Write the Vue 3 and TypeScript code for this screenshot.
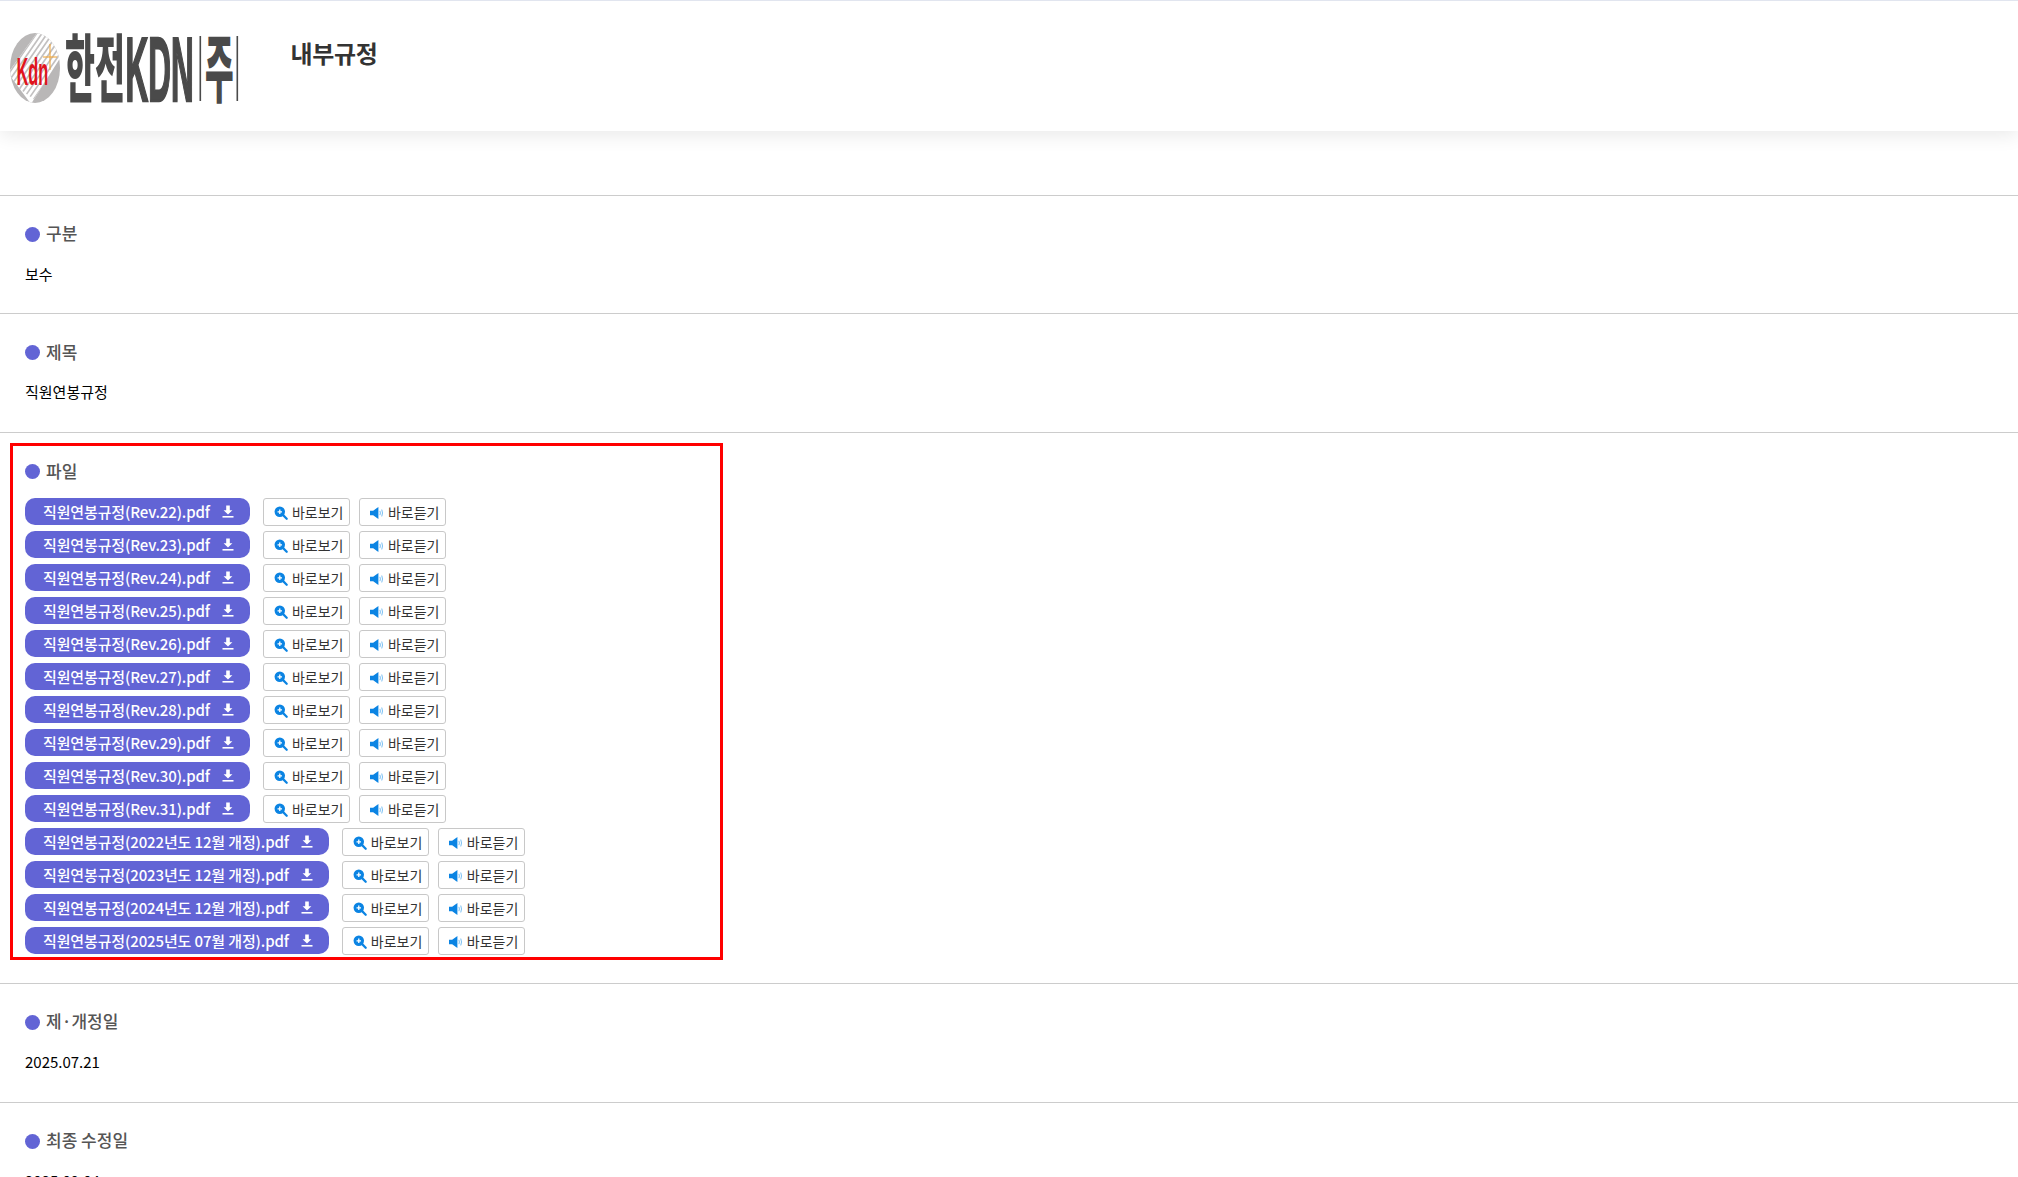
<script setup lang="ts">
const files: string[] = [
  ...Array.from({ length: 10 }, (_, i) => `직원연봉규정(Rev.${22 + i}).pdf`),
  '직원연봉규정(2022년도 12월 개정).pdf',
  '직원연봉규정(2023년도 12월 개정).pdf',
  '직원연봉규정(2024년도 12월 개정).pdf',
  '직원연봉규정(2025년도 07월 개정).pdf',
]
const stripes: number[] = [0, 3.6, 7.2, 10.8, 14.4, 18, 21.6, 25.2, 28.8]
</script>

<template>
  <div class="page">
    <header class="header">
      <svg class="logo" viewBox="0 0 240 72" aria-label="한전KDN주">
        <defs>
          <clipPath id="orb"><ellipse cx="25" cy="35" rx="25" ry="35" /></clipPath>
          <clipPath id="band"><path d="M-2 40 L29 -3 L54 19 L21 71 Z" /></clipPath>
        </defs>
        <g clip-path="url(#orb)">
          <rect x="0" y="0" width="52" height="72" fill="#b9b7b7" />
          <path d="M-2 40 L29 -3 L54 19 L21 71 Z" fill="#fff" />
          <g clip-path="url(#band)" stroke="#c2c0c0" stroke-width="1.7">
            <line v-for="s in stripes" :key="s" :x1="s - 5" :y1="46 + s * 0.7" :x2="s + 29" :y2="-3 + s * 0.7" />
          </g>
        </g>
        <g stroke="#f0a63a" stroke-width="1.1">
          <line x1="40" y1="11" x2="40" y2="37" />
          <line x1="33" y1="24" x2="47" y2="24" />
        </g>
        <text class="kdn" transform="translate(6.5 52) scale(0.42 1)">Kdn</text>
        <text class="ko" transform="translate(55 63) scale(0.44 1)">한전</text>
        <text class="en" transform="translate(115.5 68) scale(0.35 1)">KDN</text>
        <rect x="189.5" y="3" width="1.6" height="65" fill="#4a4a4a" />
        <text class="ko" transform="translate(195 63) scale(0.42 1)">주</text>
        <rect x="226.5" y="3" width="1.6" height="65" fill="#4a4a4a" />
      </svg>
      <h1 class="title">내부규정</h1>
    </header>
    <div class="spacer"></div>

    <section class="field">
      <h2 class="label">구분</h2>
      <p class="value">보수</p>
    </section>
    <section class="field">
      <h2 class="label">제목</h2>
      <p class="value">직원연봉규정</p>
    </section>
    <section class="field files-field">
      <div class="marked">
        <h2 class="label">파일</h2>
        <ul class="files">
          <li v-for="f in files" :key="f" class="file">
            <a class="pill">
              <span>{{ f }}</span>
              <svg class="dl" viewBox="0 0 12 13">
                <path d="M4.2 0.5h3.6v4.7h2.6L6 9.6 1.6 5.2h2.6z" fill="#fff" />
                <rect x="0.5" y="11" width="11" height="1.6" fill="#fff" />
              </svg>
            </a>
            <a class="btn view">
              <svg class="ic" viewBox="0 0 15 15">
                <line x1="9" y1="9" x2="13.6" y2="13.6" stroke="#0b84e3" stroke-width="2.4" stroke-linecap="round" />
                <circle cx="6.2" cy="6.2" r="5.6" fill="#0b84e3" />
                <path d="M3.8 5.5h1.7V3.8h1.4v1.7h1.7v1.4H6.9v1.7H5.5V6.9H3.8z" fill="#fff" />
              </svg>
              <span>바로보기</span>
            </a>
            <a class="btn listen">
              <svg class="ic" viewBox="0 0 15 15">
                <path d="M0 5h3.4L9 1v13L3.4 10H0z" fill="#0b84e3" />
                <path d="M10.6 5.2q1 2.3 0 4.6M12.6 3.8q1.6 3.7 0 7.4" fill="none" stroke="#5db2f0" stroke-width="0.9" />
              </svg>
              <span>바로듣기</span>
            </a>
          </li>
        </ul>
      </div>
    </section>
    <section class="field">
      <h2 class="label">제·개정일</h2>
      <p class="value">2025.07.21</p>
    </section>
    <section class="field">
      <h2 class="label">최종 수정일</h2>
      <p class="value">2025.09.04</p>
    </section>
  </div>
</template>

<style>
html, body { margin: 0; overflow: hidden; background: #fff; }
</style>

<style scoped>
.page {
  font-family: "Noto Sans CJK KR", "Noto Sans", sans-serif;
  color: #000;
  width: 100%;
}
.header {
  height: 130px;
  border-top: 1px solid #e1e5ef;
  background: #fff;
  box-shadow: 0 4px 18px rgba(0, 0, 0, 0.09);
  display: flex;
  align-items: flex-start;
  position: relative;
}
.logo {
  width: 240px;
  height: 72px;
  margin: 32px 0 0 10px;
  flex: none;
  overflow: visible;
}
.kdn { font: 700 39px "Liberation Sans", sans-serif; fill: #e0141c; }
.ko { font: 900 74px "Noto Sans CJK KR", sans-serif; fill: #4a4a4a; }
.en { font: 700 90px "Liberation Sans", sans-serif; fill: #4a4a4a; stroke: #4a4a4a; stroke-width: 2.5px; }
.title {
  margin: 34px 0 0 40.5px;
  font-size: 24px;
  line-height: 35px;
  font-weight: 700;
  letter-spacing: -0.3px;
  color: #333;
}
.spacer { height: 63.8px; }
.field {
  border-top: 1px solid #ccc;
  padding: 24.5px 25px 0;
  height: 118.6px;
  box-sizing: border-box;
}
.label {
  margin: 0;
  display: flex;
  align-items: center;
  gap: 6px;
  font-size: 17px;
  line-height: 25px;
  font-weight: 500;
  color: #555;
  white-space: pre;
}
.label::before {
  content: "";
  width: 15px;
  height: 15px;
  margin-top: 3px;
  border-radius: 50%;
  background: #6264d5;
  flex: none;
}
.value {
  margin: 17.5px 0 0;
  font-size: 15px;
  line-height: 22px;
  font-weight: 400;
}
.files-field {
  height: 551px;
  padding: 10px 0 0 10px;
}
.marked {
  width: 713px;
  height: 517px;
  box-sizing: border-box;
  border: 3px solid #f00;
  padding: 12px 12px 0;
}
.files {
  list-style: none;
  margin: 15px 0 0;
  padding: 0;
}
.file {
  display: flex;
  align-items: flex-start;
  height: 33px;
}
.pill {
  display: flex;
  align-items: center;
  gap: 12px;
  height: 27px;
  padding: 0 16px 0 18px;
  border-radius: 10px;
  background: #6264d5;
  color: #fff;
  font-size: 15px;
  font-weight: 500;
  letter-spacing: -0.13px;
  white-space: pre;
}
.dl { width: 12px; height: 13px; flex: none; }
.btn {
  display: flex;
  align-items: center;
  gap: 4px;
  box-sizing: border-box;
  height: 28px;
  width: 87px;
  padding-left: 10px;
  border: 1px solid #c8c8c8;
  border-radius: 3px;
  background: #fff;
  color: #333;
  font-size: 14px;
  white-space: nowrap;
}
.view { margin-left: 13px; }
.listen { margin-left: 9px; }
.ic { width: 14px; height: 14px; flex: none; margin-top: 2px; }
</style>
